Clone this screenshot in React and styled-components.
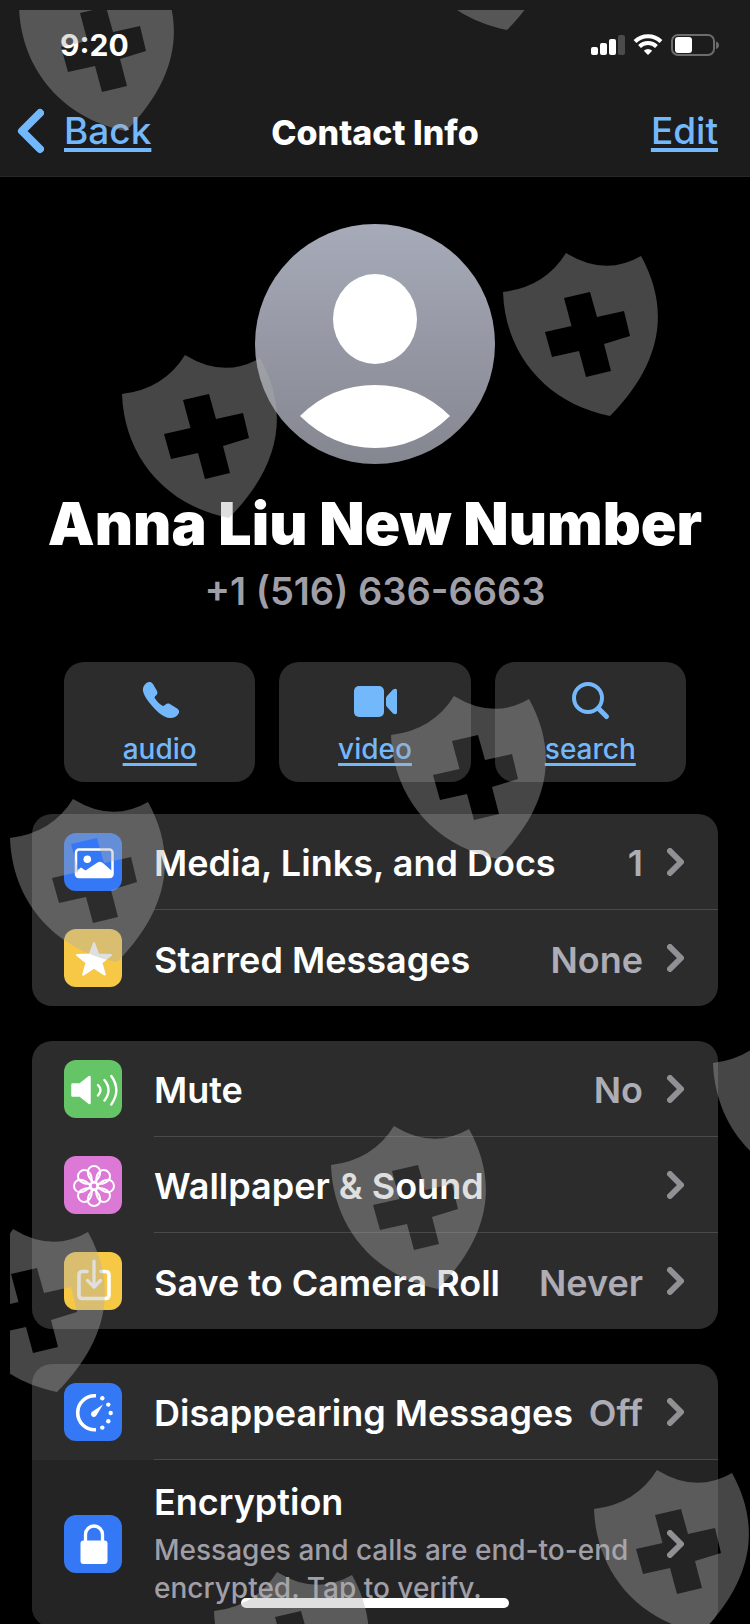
import React from "react"
import styled, { createGlobalStyle } from "styled-components"

const shields = [
  { x: 19, y: -32 },
  { x: 400, y: -133 },
  { x: 503, y: 253 },
  { x: 122, y: 355 },
  { x: 391, y: 696 },
  { x: 10, y: 799 },
  { x: 713, y: 1024 },
  { x: 331, y: 1126 },
  { x: -50, y: 1229 },
  { x: 594, y: 1470 },
  { x: 214, y: 1572 },
]

const App = () => {
  return (
    <Screen>
      <GlobalStyle />
      <Header>
        <StatusBar>
          <Time>9:20</Time>
          <StatusIcons />
        </StatusBar>
        <NavBar>
          <BackLink href="#back">
            <BackArrow />
            <LinkText>Back</LinkText>
          </BackLink>
          <Title>Contact Info</Title>
          <EditLink href="#edit">
            <LinkText>Edit</LinkText>
          </EditLink>
        </NavBar>
      </Header>
      <main>
        <Profile>
          <Avatar />
          <Name>Anna Liu New Number</Name>
          <Phone>+1 (516) 636-6663</Phone>
        </Profile>
        <Actions>
          <Action icon={<AudioIcon />} label="audio" />
          <Action icon={<VideoIcon />} label="video" />
          <Action icon={<SearchIcon />} label="search" />
        </Actions>
        <Groups>
          <Group>
            <Row color="#3478f6" icon={<MediaIcon />} title="Media, Links, and Docs" value="1" />
            <Row color="#f7c845" icon={<StarIcon />} title="Starred Messages" value="None" />
          </Group>
          <Group>
            <Row color="#65c466" icon={<SpeakerIcon />} title="Mute" value="No" />
            <Row color="#dc79d6" icon={<FlowerIcon />} title="Wallpaper & Sound" />
            <Row color="#f7c845" icon={<SaveIcon />} title="Save to Camera Roll" value="Never" />
          </Group>
          <Group>
            <Row color="#3478f6" icon={<TimerIcon />} title="Disappearing Messages" value="Off" />
            <Row
              color="#3478f6"
              icon={<LockIcon />}
              title="Encryption"
              note="Messages and calls are end-to-end encrypted. Tap to verify."
              pressed
            />
          </Group>
        </Groups>
      </main>
      <HomeIndicator />
      <Watermark aria-hidden="true">
        {shields.map((s) => (
          <Shield key={`${s.x},${s.y}`} style={{ left: s.x - 10, top: s.y - 10 }} />
        ))}
      </Watermark>
    </Screen>
  )
}

export default App

const Action = ({ icon, label }) => (
  <ActionButton>
    {icon}
    <ActionLabel>{label}</ActionLabel>
  </ActionButton>
)

const Row = ({ color, icon, title, value, note, pressed }) => (
  <RowButton $pressed={pressed}>
    <Tile $color={color}>{icon}</Tile>
    <RowBody>
      <RowText>
        <RowTitle>{title}</RowTitle>
        {note && <RowNote>{note}</RowNote>}
      </RowText>
      {value && <RowValue>{value}</RowValue>}
      <Chevron />
    </RowBody>
  </RowButton>
)

const StatusIcons = () => (
  <svg width="128" height="24" viewBox="0 0 128 24" fill="none">
    <g fill="#fff">
      <rect x="0" y="14" width="7" height="8" rx="2" />
      <rect x="9" y="10" width="7" height="12" rx="2" />
      <rect x="18" y="6" width="7" height="16" rx="2" />
      <rect x="27" y="2" width="7" height="20" rx="2" fill="#4b4b4b" />
    </g>
    <g stroke="#fff" strokeWidth="4">
      <path d="M44 8.5a18.5 18.5 0 0 1 26 0" />
      <path d="M48.5 13.5a12 12 0 0 1 17 0" />
    </g>
    <path d="M57 22l-4.2-4.2a6 6 0 0 1 8.4 0z" fill="#fff" />
    <rect x="81" y="2" width="42" height="20" rx="6" stroke="#6c6c6c" strokeWidth="2" />
    <rect x="84" y="4" width="17" height="16" rx="3" fill="#fff" />
    <path d="M125 8.5c4 1 4 6.5 0 7.5z" fill="#6c6c6c" />
  </svg>
)

const BackArrow = () => (
  <svg width="27" height="46" viewBox="0 0 27 46" fill="none">
    <path d="M23 5L5 23l18 18" stroke="#74b8fc" strokeWidth="8" strokeLinecap="round" strokeLinejoin="round" />
  </svg>
)

const Avatar = () => (
  <svg width="240" height="240" viewBox="0 0 240 240">
    <defs>
      <linearGradient id="avatar" x1="0" y1="0" x2="0" y2="1">
        <stop offset="0" stopColor="#a7aab8" />
        <stop offset="1" stopColor="#848790" />
      </linearGradient>
    </defs>
    <circle cx="120" cy="120" r="120" fill="url(#avatar)" />
    <ellipse cx="120" cy="95" rx="42" ry="45" fill="#fff" />
    <path d="M45 192Q76 161 120 161T195 192Q162 224 120 224T45 192z" fill="#fff" />
  </svg>
)

const AudioIcon = () => (
  <svg width="44" height="44" viewBox="0 0 44 44">
    <path
      d="M10 3.2C12 2.6 13.5 3 15 5l4 7c1 2 0 3.5-1 4.5s-2 1.5-1 3c2 3 4 5 7 7 1.5 1 2.5 0 3.5-1s2.5-1.500 4-.7l8 5c2 1.5 2 3.5 1 5-2 3-4.5 4.3-8 4.3-4 0-8-2-12-5.500C11 24 6 17.5 5 12 4.5 7.5 7 4.5 10 3.2z"
      fill="#74b8fc"
    />
  </svg>
)

const VideoIcon = () => (
  <svg width="44" height="44" viewBox="0 0 44 44" fill="#74b8fc">
    <rect x="1" y="7" width="30" height="31" rx="5" />
    <path d="M33 19.5q0-1.500 1-2.500l6-6.500q4-2 4 1v22q0 3-4 1l-6-6.500q-1-1-1-2.500z" />
  </svg>
)

const SearchIcon = () => (
  <svg width="44" height="44" viewBox="0 0 44 44" fill="none" stroke="#74b8fc" strokeLinecap="round">
    <circle cx="20" cy="19" r="14" strokeWidth="4" />
    <path d="M30.5 29.5L38.5 37.5" strokeWidth="5" />
  </svg>
)

const Glyph = ({ children }) => (
  <svg width="58" height="58" viewBox="0 0 58 58" fill="none" stroke="#fff" strokeLinecap="round" strokeLinejoin="round">
    {children}
  </svg>
)

const MediaIcon = () => (
  <Glyph>
    <rect x="12" y="16.5" width="36.5" height="27.5" rx="3" strokeWidth="2.5" />
    <circle cx="23.3" cy="26.3" r="3.8" fill="#fff" stroke="none" />
    <path d="M12 38.5l5-4 4.5 3 12-8q3-2 6 1l9 8v5q0 1-1 1H13q-1 0-1-1z" fill="#fff" stroke="none" />
  </Glyph>
)

const StarIcon = () => (
  <Glyph>
    <path
      d="M30 14l4.2 11.4 12.8.5-9.6 7.7 3.4 12L30 38.7 19.2 45.6l3.400-12L13 25.9l12.800-.5z"
      fill="#fff"
      strokeWidth="2"
    />
  </Glyph>
)

const SpeakerIcon = () => (
  <Glyph>
    <path d="M8.5 24.5h7.5l9.5-7.500v26L16 35.500H8.500z" fill="#fff" strokeWidth="2.5" />
    <path d="M34 25q5 5 0 10.5M40.5 20q8 10 0 20.5M47.3 16q10 14 0 28.5" strokeWidth="2.4" />
  </Glyph>
)

const FlowerIcon = () => (
  <Glyph>
    {[0, 45, 90, 135, 180, 225, 270, 315].map((angle) => (
      <path
        key={angle}
        d="M30 26.5c-3.500-2.500-6.200-6-6.200-10.500a6.200 6 0 0 1 12.400 0c0 4.500-2.700 8-6.200 10.500z"
        transform={`rotate(${angle} 30 30)`}
        strokeWidth="2"
      />
    ))}
    <circle cx="30" cy="30" r="3.4" strokeWidth="2" />
  </Glyph>
)

const SaveIcon = () => (
  <Glyph>
    <path d="M23 19.5h-4.500q-3.500 0-3.500 3.500v20q0 3.500 3.500 3.500h23q3.500 0 3.500-3.500V23q0-3.500-3.500-3.500H37" strokeWidth="3.6" />
    <path d="M30 9v25.500M23.500 28.500l6.500 6.500 6.500-6.500" strokeWidth="3.2" />
  </Glyph>
)

const TimerIcon = () => (
  <Glyph>
    <path d="M32 12.8a17 17 0 1 0 0 33.9" strokeWidth="3.6" strokeLinecap="butt" />
    <g fill="#fff" stroke="none">
      <circle cx="38.3" cy="15.3" r="2.2" />
      <circle cx="44.3" cy="21.6" r="2.2" />
      <circle cx="46.7" cy="30" r="2.2" />
      <circle cx="44.3" cy="38.3" r="2.2" />
      <circle cx="38.3" cy="44.6" r="2.2" />
      <path d="M39 21.5l-10.500 7a2.900 2.900 0 1 0 4 3.800z" />
    </g>
  </Glyph>
)

const LockIcon = () => (
  <Glyph>
    <rect x="16.5" y="25.5" width="27" height="23.5" rx="3" fill="#fff" stroke="none" />
    <path d="M21.5 27v-7.500a8.500 8.500 0 0 1 17 0V27" strokeWidth="3.3" />
  </Glyph>
)

const Chevron = () => (
  <svg width="17" height="28" viewBox="0 0 17 28" fill="none">
    <path d="M3 3l11 11L3 25" stroke="#909095" strokeWidth="6" strokeLinecap="round" strokeLinejoin="round" />
  </svg>
)

const Shield = ({ style }) => (
  <ShieldSvg style={style} width="158" height="164" viewBox="0 0 158 164">
    <path
      fillRule="evenodd"
      d="M0 39Q42 34 63 0 102 24 138 3C165 52 163 106 107 163 42 150 2 100 0 39zM61 45l7.500 28L42 79l7 25 27-6 7 26 25-6-7-27 26-8-6-25-27 6-7-25z"
    />
  </ShieldSvg>
)

const GlobalStyle = createGlobalStyle`
  * {
    box-sizing: border-box;
  }
  body {
    margin: 0;
    background-color: #000;
    color: #fff;
    font-family: Inter, "Liberation Sans", sans-serif;
  }
  button {
    border: 0;
    padding: 0;
    background: none;
    color: inherit;
    font: inherit;
    cursor: pointer;
  }
  svg {
    display: block;
    flex-shrink: 0;
  }
`

const Screen = styled.div`
  position: relative;
  height: 100vh;
  overflow: hidden;
`

const Header = styled.header`
  background-color: #1c1c1c;
  border-bottom: 1px solid #272727;
`

const StatusBar = styled.div`
  display: flex;
  align-items: center;
  justify-content: space-between;
  height: 90px;
  padding: 0 31px 0 60px;
`

const Time = styled.div`
  font-size: 30px;
  font-weight: 700;
  line-height: 36px;
`

const NavBar = styled.nav`
  display: grid;
  grid-template-columns: 1fr auto 1fr;
  align-items: center;
  height: 86px;
  padding: 0 17px;
`

const NavLink = styled.a`
  padding-bottom: 4px;
  color: #74b8fc;
  text-decoration: none;
`

const BackLink = styled(NavLink)`
  display: flex;
  align-items: center;
  gap: 20px;
`

const EditLink = styled(NavLink)`
  justify-self: end;
  padding-right: 15px;
`

const LinkText = styled.span`
  font-size: 37px;
  font-weight: 500;
  line-height: 44px;
  text-decoration: underline;
  text-decoration-thickness: 4px;
  text-decoration-skip-ink: none;
  text-underline-offset: 4px;
`

const Title = styled.h1`
  margin: 0;
  font-size: 34px;
  font-weight: 800;
  line-height: 44px;
`

const Profile = styled.section`
  display: flex;
  flex-direction: column;
  align-items: center;
  padding-top: 47px;
`

const Name = styled.h2`
  margin: 24px 0 0;
  font-size: 59px;
  font-weight: 900;
  line-height: 72px;
  white-space: nowrap;
`

const Phone = styled.div`
  margin-top: 8px;
  color: #a09fa7;
  font-size: 38px;
  font-weight: 600;
  line-height: 46px;
`

const Actions = styled.div`
  display: grid;
  grid-template-columns: repeat(3, 1fr);
  gap: 24px;
  padding: 48px 64px 0;
`

const ActionButton = styled.button`
  display: flex;
  flex-direction: column;
  align-items: center;
  height: 120px;
  padding-top: 17px;
  border-radius: 20px;
  background-color: #2c2c2d;
`

const ActionLabel = styled.span`
  margin-top: 8px;
  color: #74b8fc;
  font-size: 28px;
  font-weight: 500;
  line-height: 36px;
  text-decoration: underline;
  text-decoration-thickness: 3px;
  text-decoration-skip-ink: none;
  text-underline-offset: 4px;
`

const Groups = styled.div`
  display: flex;
  flex-direction: column;
  gap: 35px;
  padding: 32px;
`

const Group = styled.section`
  border-radius: 20px;
  overflow: hidden;
  background-color: #2c2c2d;
`

const Tile = styled.span`
  flex-shrink: 0;
  width: 58px;
  height: 58px;
  border-radius: 12px;
  background-color: ${(props) => props.$color};
`

const RowBody = styled.span`
  display: flex;
  flex: 1;
  align-items: center;
  align-self: stretch;
  min-width: 0;
  padding-right: 34px;
`

const RowButton = styled.button`
  display: flex;
  align-items: center;
  gap: 32px;
  width: 100%;
  min-height: 96px;
  padding-left: 32px;
  text-align: left;
  background-color: ${(props) => (props.$pressed ? "#242425" : "transparent")};

  &:not(:last-child) ${RowBody} {
    border-bottom: 1px solid #49494d;
  }
`

const RowText = styled.span`
  display: flex;
  flex: 1;
  flex-direction: column;
  gap: 6px;
  padding: 19px 0 20px;
`

const RowTitle = styled.span`
  font-size: 36px;
  font-weight: 600;
  line-height: 46px;
  white-space: nowrap;

  &:only-child {
    margin-top: 4px;
  }
`

const RowNote = styled.span`
  color: #a09fa7;
  font-size: 28px;
  font-weight: 500;
  line-height: 38px;
`

const RowValue = styled.span`
  margin: 3px 24px 0 0;
  color: #aeadb5;
  font-size: 36px;
  font-weight: 600;
  line-height: 46px;
`

const HomeIndicator = styled.div`
  position: absolute;
  bottom: 16px;
  left: 50%;
  width: 268px;
  height: 10px;
  margin-left: -134px;
  border-radius: 5px;
  background-color: #fff;
`

const Watermark = styled.div`
  position: absolute;
  inset: 10px 0 0 10px;
  overflow: hidden;
  pointer-events: none;
`

const ShieldSvg = styled.svg`
  position: absolute;
  fill: rgba(175, 175, 175, 0.4);
`
